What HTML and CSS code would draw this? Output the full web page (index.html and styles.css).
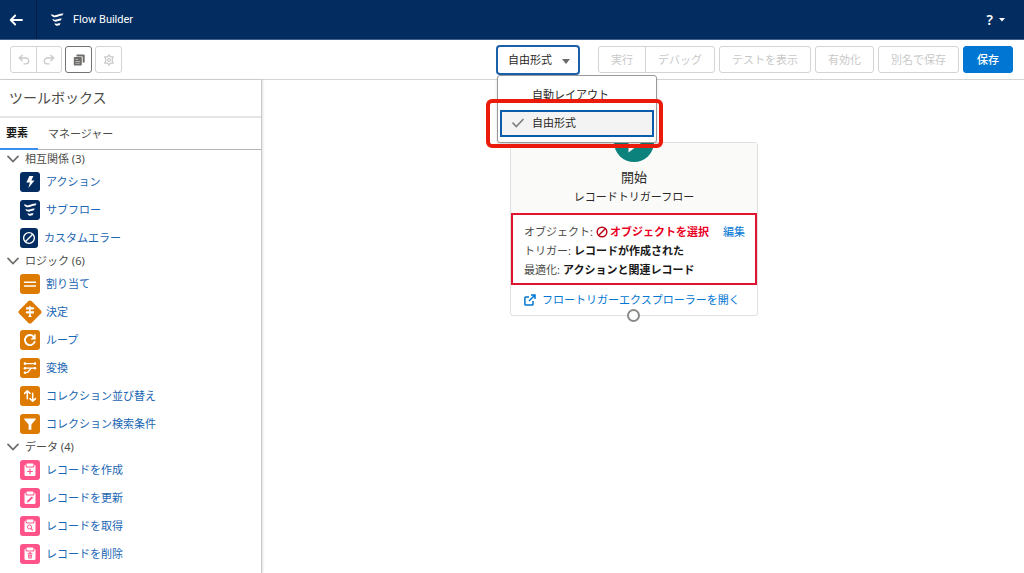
FILE: index.html
```html
<!DOCTYPE html>
<html lang="ja">
<head>
<meta charset="utf-8">
<meta name="viewport" content="width=device-width, initial-scale=1">
<title>Flow Builder</title>
<link rel="stylesheet" href="styles.css">
</head>
<body>
<svg class="sprite" aria-hidden="true">
  <symbol id="flow" viewBox="0 0 20 20"><path d="M5.400 4.600C8.200 7 10.800 3.200 16.600 3.500L15.300 5.400C11 5.400 9.600 8.300 6.200 6.900C4.800 6.300 4 5.300 4 4.300C4.400 4.500 4.900 4.600 5.400 4.600ZM6.500 9.300C8.800 10.900 10.600 8.200 14.800 8.600L13.700 10.500C10.900 10.400 9.700 12.400 7.300 11.300C6.100 10.700 5.600 9.900 5.500 8.900ZM8.300 13.500C9.700 14.500 11 12.900 13.600 13.200L12.600 15.200C11.200 15.200 10.400 16.300 9 15.500C8 15 7.600 14.200 7.500 13.200Z" fill="currentColor"/></symbol>
  <symbol id="chevron" viewBox="0 0 12 12"><path d="M1 3.400 6 8.600 11 3.400" fill="none" stroke="currentColor" stroke-width="1.700" stroke-linecap="round"/></symbol>
  <symbol id="ban" viewBox="0 0 12 12"><circle cx="6" cy="6" r="4.800" fill="none" stroke="currentColor" stroke-width="1.500"/><path d="M2.800 9.200 9.200 2.800" stroke="currentColor" stroke-width="1.500"/></symbol>
  <symbol id="clip" viewBox="0 0 20 20"><path d="M7.300 3.600h5.400a.8.8 0 0 1 .8.8v1.200a.8.8 0 0 1-.8.8H7.300a.8.8 0 0 1-.8-.8V4.400a.8.8 0 0 1 .8-.8Z" fill="#fff"/><path d="M5.600 4.800v1.100a1.500 1.500 0 0 0 1.500 1.500h5.800a1.500 1.500 0 0 0 1.500-1.500V4.800a1.200 1.200 0 0 1 1.100 1.200v8.800a1.200 1.200 0 0 1-1.200 1.200H5.700a1.200 1.200 0 0 1-1.200-1.200V6a1.200 1.200 0 0 1 1.100-1.200Z" fill="#fff"/></symbol>
</svg>

<header class="topbar">
  <button class="topbar-back" aria-label="戻る"><svg width="14" height="12" viewBox="0 0 14 12"><path d="M13 6H2M6.200 1.500 1.700 6l4.500 4.500" fill="none" stroke="currentColor" stroke-width="1.800" stroke-linecap="round" stroke-linejoin="round"/></svg></button>
  <svg class="topbar-logo" width="20" height="20"><use href="#flow"/></svg>
  <span class="topbar-title">Flow Builder</span>
  <button class="topbar-help" aria-label="ヘルプ">?<svg width="6" height="4" viewBox="0 0 6 4"><path d="M0 0h6L3 3.500Z" fill="currentColor"/></svg></button>
</header>

<div class="toolbar">
  <div class="btn-group">
    <button class="btn btn-icon" aria-label="元に戻す" disabled><svg width="12" height="12" viewBox="0 0 12 12"><path d="M4.200 1.200 1.300 4l2.900 2.800M1.500 4h6.300a2.900 2.900 0 0 1 0 5.900H6" fill="none" stroke="currentColor" stroke-width="1.300" stroke-linecap="round"/></svg></button>
    <button class="btn btn-icon" aria-label="やり直し" disabled><svg width="12" height="12" viewBox="0 0 12 12"><path d="M7.800 1.200 10.700 4 7.800 6.800M10.500 4H4.200a2.900 2.900 0 0 0 0 5.900H6" fill="none" stroke="currentColor" stroke-width="1.300" stroke-linecap="round"/></svg></button>
  </div>
  <button class="btn btn-icon btn-active" aria-label="ツールボックスの切り替え"><svg width="12" height="12" viewBox="0 0 12 12"><path d="M3.500 .5h7.200a1 1 0 0 1 1 1V8.500h-2V2.500H3.500Z" fill="currentColor"/><path d="M1.500 3.100h6.600a.7.7 0 0 1 .7.7v7a.7.7 0 0 1-.7.7H1.500a.7.7 0 0 1-.7-.7v-7a.7.7 0 0 1 .7-.7Z" fill="currentColor"/><path d="M2.500 5.500H5M2.500 7.500h4.400M2.500 9.300h4.400" stroke="#ccc" stroke-width=".7"/></svg></button>
  <button class="btn btn-icon" aria-label="設定" disabled><svg width="12" height="12" viewBox="0 0 12 12"><path d="m6 .8 1.400 2.100 2.900-.1L9.200 5.200v1.600l1.100 2.400-2.900-.1L6 11.200 4.600 9.100l-2.900.1 1.100-2.400V5.200L1.700 2.800l2.900.1Z" fill="none" stroke="currentColor" stroke-width="1.200" stroke-linejoin="round"/><circle cx="6" cy="6" r="1.400" fill="none" stroke="currentColor" stroke-width="1.100"/></svg></button>

  <div class="toolbar-right">
    <div class="layout-picker">
      <select class="layout-select" aria-label="レイアウト"><option>自由形式</option><option>自動レイアウト</option></select>
      <svg class="layout-caret" width="8" height="5" viewBox="0 0 8 5"><path d="M0 0h8L4 5Z" fill="currentColor"/></svg>
      <ul class="menu" role="listbox" aria-label="レイアウト">
        <li class="menu-item" role="option" aria-selected="false">自動レイアウト</li>
        <li class="menu-item menu-item-selected" role="option" aria-selected="true"><svg width="12" height="10" viewBox="0 0 12 10"><path d="m1 5.200 3.300 3.300L11 1.500" fill="none" stroke="currentColor" stroke-width="1.700" stroke-linecap="round"/></svg>自由形式</li>
      </ul>
      <div class="highlight"></div>
    </div>
    <div class="btn-group">
      <button class="btn" disabled>実行</button>
      <button class="btn" disabled>デバッグ</button>
    </div>
    <button class="btn" disabled>テストを表示</button>
    <button class="btn" disabled>有効化</button>
    <button class="btn" disabled>別名で保存</button>
    <button class="btn btn-primary">保存</button>
  </div>
</div>

<div class="workspace">
  <aside class="sidebar">
    <h1 class="sidebar-title">ツールボックス</h1>
    <div class="tabs" role="tablist">
      <button class="tab tab-current" role="tab" aria-selected="true">要素</button>
      <button class="tab" role="tab" aria-selected="false">マネージャー</button>
    </div>

    <h2 class="category"><svg width="12" height="12"><use href="#chevron"/></svg>相互関係 (3)</h2>
    <ul class="elements">
      <li><a class="element" href="#"><svg class="tile navy" viewBox="0 0 20 20"><path d="M9.400 4h4l-2 4.400h3.100L8.400 16l1.500-5.600H6.400Z" fill="#fff"/></svg>アクション</a></li>
      <li><a class="element" href="#"><svg class="tile navy"><use href="#flow"/></svg>サブフロー</a></li>
      <li><a class="element" href="#"><svg class="tile tile-narrow navy" viewBox="0 0 18 20"><circle cx="9" cy="10" r="5.400" fill="none" stroke="#fff" stroke-width="1.400"/><path d="m5.300 13.700 7.400-7.400" stroke="#fff" stroke-width="1.400"/></svg>カスタムエラー</a></li>
    </ul>

    <h2 class="category"><svg width="12" height="12"><use href="#chevron"/></svg>ロジック (6)</h2>
    <ul class="elements">
      <li><a class="element" href="#"><svg class="tile orange" viewBox="0 0 20 20"><path d="M4.500 8.300h11M4.500 11.900h11" stroke="#fff" stroke-width="1.500" stroke-linecap="round"/></svg>割り当て</a></li>
      <li><a class="element" href="#"><svg class="tile tile-diamond" viewBox="0 0 24 24"><rect x="3.200" y="3.200" width="17.600" height="17.600" rx="2.500" transform="rotate(45 12 12)" fill="#dd7a01"/><path d="M12 6v10" stroke="#fff" stroke-width="1.400"/><path d="M8 7.200h7.300l1.200 1.100-1.200 1.100H8ZM16 11.200H8.700l-1.200 1.100 1.200 1.100H16ZM12 14.300l2 2.700h-4Z" fill="#fff"/></svg>決定</a></li>
      <li><a class="element" href="#"><svg class="tile orange" viewBox="0 0 20 20"><path d="M14.600 12A5 5 0 1 1 13.600 6.600" fill="none" stroke="#fff" stroke-width="1.900" stroke-linecap="round"/><path d="M15.700 4.200v5.200h-5.200l1.900-1.900 1.800-.9V4.200Z" fill="#fff"/></svg>ループ</a></li>
      <li><a class="element" href="#"><svg class="tile orange" viewBox="0 0 20 20"><path d="M5 5.600h10M5 10.200h10M5 14.700h1.500c3 0 2.700-4.500 5.500-4.500" fill="none" stroke="#fff" stroke-width="1.300"/><g fill="#fff"><circle cx="5" cy="5.600" r="1.300"/><circle cx="5" cy="10.200" r="1.300"/><circle cx="5" cy="14.700" r="1.300"/><circle cx="15" cy="5.600" r="1.300"/><circle cx="15" cy="10.200" r="1.300"/></g></svg>変換</a></li>
      <li><a class="element" href="#"><svg class="tile orange" viewBox="0 0 20 20"><path d="M7.300 12.700V5M4.600 7.400l2.700-2.700L10 7.400M12.700 7.300V15M10 12.600l2.700 2.700 2.700-2.700" fill="none" stroke="#fff" stroke-width="1.500" stroke-linecap="round" stroke-linejoin="round"/></svg>コレクション並び替え</a></li>
      <li><a class="element" href="#"><svg class="tile orange" viewBox="0 0 20 20"><path d="M4.300 4.500h11.400v1l-4.300 5v5.200H8.600v-5.200l-4.300-5Z" fill="#fff"/></svg>コレクション検索条件</a></li>
    </ul>

    <h2 class="category"><svg width="12" height="12"><use href="#chevron"/></svg>データ (4)</h2>
    <ul class="elements">
      <li><a class="element" href="#"><svg class="tile pink" viewBox="0 0 20 20"><use href="#clip"/><path d="M10 8.700v5.600M7.200 11.500h5.600" stroke="#ff538a" stroke-width="1.200"/></svg>レコードを作成</a></li>
      <li><a class="element" href="#"><svg class="tile pink" viewBox="0 0 20 20"><use href="#clip"/><path d="m7 14.400.5-1.800 4.300-4.200 1.300 1.300-4.300 4.200Z" fill="#ff538a"/></svg>レコードを更新</a></li>
      <li><a class="element" href="#"><svg class="tile pink" viewBox="0 0 20 20"><use href="#clip"/><circle cx="9.500" cy="11" r="2" fill="none" stroke="#ff538a"/><path d="m11 12.500 1.800 1.800" stroke="#ff538a" stroke-width="1.200"/></svg>レコードを取得</a></li>
      <li><a class="element" href="#"><svg class="tile pink" viewBox="0 0 20 20"><use href="#clip"/><path d="M7.500 9.800h5M9 9.400v-.6h2v.6" fill="none" stroke="#ff538a"/><path d="M8 10.800h4l-.3 3.800H8.300Z" fill="#ff538a"/><path d="M9.400 11.500v2.300M10.600 11.500v2.300" stroke="#fff" stroke-width=".5"/></svg>レコードを削除</a></li>
    </ul>
  </aside>

  <main class="canvas">
    <section class="node">
      <div class="node-head">
        <svg class="node-badge" width="40" height="40" viewBox="0 0 40 40"><circle cx="20" cy="20" r="20" fill="#0b827c"/><path d="M14.500 10v20.500L28 20.200Z" fill="#fff"/></svg>
        <h2 class="node-title">開始</h2>
        <p class="node-type">レコードトリガーフロー</p>
      </div>
      <div class="node-config">
        <p class="node-row">オブジェクト: <span class="node-error"><svg width="12" height="12"><use href="#ban"/></svg><strong>オブジェクトを選択</strong></span><a class="node-edit" href="#">編集</a></p>
        <p class="node-row">トリガー: <strong>レコードが作成された</strong></p>
        <p class="node-row">最適化: <strong>アクションと関連レコード</strong></p>
      </div>
      <a class="node-link" href="#"><svg width="12" height="12" viewBox="0 0 12 12"><path d="M5 3H1.700a.8.8 0 0 0-.8.8v6.500a.8.8 0 0 0 .8.8h6.500a.8.800 0 0 0 .8-.8V7M5 7l5.500-5.500M7 1h4v4" fill="none" stroke="currentColor" stroke-width="1.500"/></svg>フロートリガーエクスプローラーを開く</a>
      <span class="node-port"></span>
    </section>
  </main>
</div>
</body>
</html>
```
FILE: styles.css
```css
* { box-sizing: border-box; }

body {
  display: flex;
  flex-direction: column;
  height: 100vh;
  margin: 0;
  overflow: hidden;
  background: #fff;
  color: #4a4a48;
  font: 11px/16px "Noto Sans", "Noto Sans CJK JP", sans-serif;
}

h1, h2, p, ul { margin: 0; padding: 0; font-size: inherit; font-weight: 400; }
ul { list-style: none; }
a { text-decoration: none; }
button, select { font: inherit; color: inherit; margin: 0; }
svg { flex: none; }
.sprite { position: absolute; width: 0; height: 0; }

.topbar {
  display: flex;
  align-items: center;
  flex: none;
  height: 40px;
  background: #032d60;
  border-bottom: 1px solid #3f5f88;
  color: #fff;
}
.topbar-back {
  display: flex;
  align-items: center;
  justify-content: center;
  align-self: stretch;
  width: 37px;
  padding: 0 4px 0 0;
  border: 0;
  border-right: 1px solid #021d45;
  background: none;
}
.topbar-logo { margin-left: 10px; }
.topbar-title { margin-left: 6px; font-family: Roboto, sans-serif; }
.topbar-help {
  display: flex;
  align-items: center;
  gap: 6px;
  margin-left: auto;
  padding: 0 19px 0 0;
  border: 0;
  background: none;
  font-size: 14px;
  font-weight: 600;
}

.toolbar {
  display: flex;
  align-items: center;
  flex: none;
  gap: 3px;
  height: 40px;
  padding: 0 11px 0 10px;
  border-bottom: 1px solid #d4d4d4;
}
.toolbar-right {
  display: flex;
  align-items: center;
  gap: 4px;
  margin-left: auto;
}
.btn-group { display: flex; }
.btn-group .btn:first-child { border-radius: 3px 0 0 3px; }
.btn-group .btn:last-child { border-radius: 0 3px 3px 0; margin-left: -1px; }
.btn {
  display: flex;
  align-items: center;
  justify-content: center;
  height: 27px;
  padding: 0 12px;
  border: 1px solid #d4d4d4;
  border-radius: 3px;
  background: #fff;
  white-space: nowrap;
}
.btn:disabled { color: #c9c9c9; }
.btn-icon { width: 27px; padding: 0; }
.btn-group .btn-icon:last-child { width: 26px; }
.btn-active { border-color: #747474; color: #706e6b; }
.btn-primary { padding: 0 13px; border-color: #0176d3; background: #0176d3; color: #fff; font-weight: 500; }

.layout-picker { position: relative; margin-right: 14px; }
.layout-select {
  display: block;
  width: 84px;
  height: 30px;
  padding: 0 10px;
  appearance: none;
  border: 2px solid #1b5fa8;
  border-radius: 4px;
  background: #fff;
  color: #2b2826;
}
.layout-caret { position: absolute; right: 10px; top: 14px; color: #6a6a6a; pointer-events: none; }
.menu {
  position: absolute;
  z-index: 2;
  top: 30px;
  left: 1px;
  width: 160px;
  padding: 5px 2px;
  border: 1px solid #999;
  border-radius: 3px;
  background: #fff;
  box-shadow: 0 2px 3px rgba(0, 0, 0, .16);
}
.menu-item {
  display: flex;
  align-items: center;
  gap: 8px;
  height: 29px;
  padding-left: 32px;
  color: #2b2826;
}
.menu-item-selected {
  height: 27px;
  padding-left: 10px;
  border: 2px solid #0b5cab;
  background: #f3f3f3;
}
.menu-item svg { color: #808080; }
.highlight {
  position: absolute;
  z-index: 3;
  top: 54px;
  left: -10px;
  width: 177px;
  height: 49px;
  border: 4px solid #ea1b0b;
  border-radius: 6px;
  pointer-events: none;
}

.workspace { display: flex; flex: 1; min-height: 0; }

.sidebar {
  flex: none;
  width: 262px;
  border-right: 1px solid #c9c9c9;
  box-shadow: 1px 0 2px rgba(0, 0, 0, .12);
}
.sidebar-title {
  height: 38px;
  padding-left: 9px;
  border-bottom: 2px solid #e5e5e5;
  font-size: 14px;
  line-height: 36px;
}
.tabs { display: flex; height: 32px; padding-bottom: 1px; border-bottom: 1px solid #b5b5b5; }
.tab { height: 32px; padding: 0 10px; border: 0; background: none; }
.tab-current {
  width: 38px;
  padding: 0 10px 0 6px;
  border-bottom: 2px solid #3a8ff0;
  color: #181818;
  font-weight: 700;
}
.category {
  display: flex;
  align-items: center;
  gap: 6px;
  height: 18px;
  padding-left: 7px;
}
.category svg { color: #706e6b; }
.element {
  display: flex;
  align-items: center;
  gap: 6px;
  height: 28px;
  padding-left: 20px;
  color: #1a66b3;
}
.tile { width: 20px; height: 20px; border-radius: 3px; color: #fff; }
.tile-narrow { width: 18px; }
.tile-diamond { width: 24px; height: 24px; margin: 0 -2px; }
.navy { background: #032d60; }
.orange { background: #dd7a01; }
.pink { background: #ff538a; }

.canvas { position: relative; flex: 1; }
.node {
  position: absolute;
  top: 62px;
  left: 248px;
  width: 248px;
  border: 1px solid #e0e0e0;
  border-radius: 3px;
  background: #fff;
}
.node-head {
  padding: 24px 0 6px;
  background: #fafaf9;
  color: #2b2826;
  text-align: center;
}
.node-badge { position: absolute; top: -21px; left: calc(50% - 20px); }
.node-title { font-size: 13px; line-height: 20px; }
.node-type { line-height: 20px; }
.node-config {
  padding: 7px 10px 4px 11px;
  border: 2px solid #e0142f;
}
.node-row { display: flex; align-items: center; gap: 3px; height: 19px; white-space: nowrap; }
.node-row strong { color: #181818; font-weight: 700; }
.node-error { display: flex; align-items: center; gap: 2px; color: #ba0517; }
.node-error strong { color: #ea001e; }
.node-edit { margin-left: auto; color: #0176d3; }
.node-link {
  display: flex;
  align-items: center;
  gap: 6px;
  height: 30px;
  padding-left: 13px;
  color: #0176d3;
  white-space: nowrap;
}
.node-port {
  position: absolute;
  bottom: -7px;
  left: calc(50% - 7px);
  width: 13px;
  height: 13px;
  border: 2px solid #8a8a8a;
  border-radius: 50%;
  background: #fff;
}
```
